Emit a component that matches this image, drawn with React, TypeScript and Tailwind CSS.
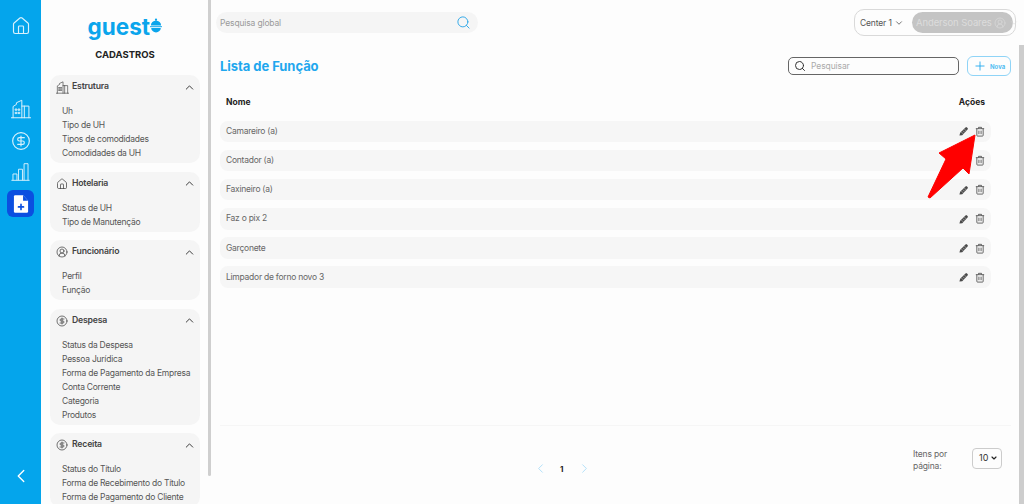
import React from "react";
import { Home, CircleDollarSign, ChevronUp, ChevronDown, ChevronLeft, ChevronRight, Search, Plus, CircleUserRound } from "lucide-react";

const Hotel = ({ className }: { className?: string }) => (
  <svg viewBox="0 0 24 24" fill="none" stroke="currentColor" strokeWidth="1.2" strokeLinejoin="round" strokeLinecap="round" className={className}>
    <path d="M0.5 22.5h23M2.5 22.5V9l4-2.5V4.5L13 1.5v21M13 8.5h8.5v14M16 8.5v14" />
    <path d="M5.5 12h1.5v1.5H5.5zM9 12h1.5v1.5H9zM5.5 16h1.5v1.5H5.5zM9 16h1.5v1.5H9z" />
  </svg>
);

const Bars = ({ className }: { className?: string }) => (
  <svg viewBox="0 0 24 24" fill="none" stroke="currentColor" strokeWidth="1.2" strokeLinejoin="round" className={className}>
    <path d="M0.5 22.5h23M2.5 22.5V14.5h5v8M9.5 22.5V8.5h5v14M16.5 22.5V1.5h5v21" />
  </svg>
);

const FilePlus = () => (
  <svg viewBox="0 0 24 24" className="w-[20px] h-[20px]">
    <path d="M5 1.5h9.5L20.5 8v13a1.5 1.5 0 0 1-1.5 1.5H5A1.5 1.5 0 0 1 3.5 21V3A1.5 1.5 0 0 1 5 1.5z" fill="#fff" />
    <path d="M14.5 1.5V8h6z" fill="#0b4fe0" />
    <path d="M12 12.5v6M9 15.5h6" stroke="#0b4fe0" strokeWidth="2" strokeLinecap="round" />
  </svg>
);

const PencilIcon = () => (
  <svg viewBox="0 0 12 12" className="w-[10px] h-[10px]">
    <path d="M0.5 11.5l0.9-3.4 6.4-6.4a1.2 1.2 0 0 1 1.7 0l0.8 0.8a1.2 1.2 0 0 1 0 1.7L3.9 11z" fill="#4a4a4a" />
    <path d="M3 7.4l2 2M4.8 5.6l2 2M6.6 3.8l2 2" stroke="#f6f6f6" strokeWidth="0.6" />
  </svg>
);

const TrashIcon = () => (
  <svg viewBox="0 0 12 12" fill="none" stroke="#4a4a4a" strokeWidth="1" strokeLinejoin="round" className="w-[10px] h-[11px]">
    <path d="M1 2.6h10M4.2 2.4V1h3.6v1.4M2.2 2.6v8a.9.9 0 0 0 .9.9h5.8a.9.9 0 0 0 .9-.9v-8M4.7 5v4.2M7.3 5v4.2" />
  </svg>
);

const Logo = () => (
  <div className="flex items-start justify-center h-[28px] text-[#0ba5ec] text-[22.5px] leading-[26px] font-bold">
    <span>guest</span>
    <svg viewBox="0 0 20 24" className="w-[12px] h-[15px] mt-[4px] ml-[0.5px]">
      <circle cx="10" cy="2.4" r="1.9" fill="#0ba5ec" />
      <path d="M1.5 12a8.5 8 0 0 1 17 0z" fill="#0ba5ec" />
      <rect x="0" y="13.2" width="20" height="1.6" fill="#0ba5ec" />
      <path d="M2 16h16a8 7.5 0 0 1-16 0z" fill="#0ba5ec" />
    </svg>
  </div>
);

type Section = { title: string; icon: React.ReactNode; items: string[] };

const sections: Section[] = [
  { title: "Estrutura", icon: <Hotel className="w-[13px] h-[13px] shrink-0" />, items: ["Uh", "Tipo de UH", "Tipos de comodidades", "Comodidades da UH"] },
  { title: "Hotelaria", icon: <Home className="w-[12px] h-[12px]" strokeWidth={1.5} />, items: ["Status de UH", "Tipo de Manutenção"] },
  { title: "Funcionário", icon: <CircleUserRound className="w-[12px] h-[12px]" strokeWidth={1.5} />, items: ["Perfil", "Função"] },
  { title: "Despesa", icon: <CircleDollarSign className="w-[12px] h-[12px]" strokeWidth={1.5} />, items: ["Status da Despesa", "Pessoa Jurídica", "Forma de Pagamento da Empresa", "Conta Corrente", "Categoria", "Produtos"] },
  { title: "Receita", icon: <CircleDollarSign className="w-[12px] h-[12px]" strokeWidth={1.5} />, items: ["Status do Título", "Forma de Recebimento do Título", "Forma de Pagamento do Cliente"] },
];

const rows = ["Camareiro (a)", "Contador (a)", "Faxineiro (a)", "Faz o pix 2", "Garçonete", "Limpador de forno novo 3"];

export default function App() {
  return (
    <div className="relative flex w-[1024px] h-[504px] overflow-hidden bg-[#fdfdfd] font-['Inter',sans-serif]">
      {/* rail */}
      <div className="flex flex-col items-center w-[41px] shrink-0 bg-[#04a5ec] text-[#d8f1fc]">
        <div className="mt-[16px] h-[20px]"><Home className="w-[20px] h-[20px]" strokeWidth={1.4} /></div>
        <div className="mt-[63px] h-[20px]"><Hotel className="w-[20px] h-[20px]" /></div>
        <div className="mt-[12px] h-[20px]"><CircleDollarSign className="w-[20px] h-[20px]" strokeWidth={1.4} /></div>
        <div className="mt-[11px] h-[20px]"><Bars className="w-[19px] h-[20px]" /></div>
        <div className="mt-[8px] w-[27px] h-[27px] rounded-[6px] bg-[#0b4fe0] flex items-center justify-center"><FilePlus /></div>
        <div className="mt-auto mb-[17px]"><ChevronLeft className="w-[22px] h-[22px] text-white" strokeWidth={1.5} /></div>
      </div>

      {/* sidebar */}
      <div className="relative w-[171px] shrink-0 h-[504px] overflow-hidden">
        <div className="pl-[9px] pr-[12px] pt-[14px]">
          <Logo />
          <div className="mt-[6px] text-center text-[9.5px] leading-[14px] font-bold text-[#222]">CADASTROS</div>
          <div className="mt-[13px] flex flex-col gap-[8.5px]">
            {sections.map((s) => (
              <div key={s.title} className="rounded-[10px] bg-[#f5f5f5] pt-[5px] pb-[3px]">
                <div className="flex items-center h-[14px] pl-[6px] pr-[4px] text-[#444]">
                  <span className="w-[12px] h-[12px] flex items-center justify-center">{s.icon}</span>
                  <span className="ml-[4px] flex-1 text-[8.7px] tracking-[-0.2px] font-semibold text-[#444]">{s.title}</span>
                  <ChevronUp className="w-[13px] h-[13px] text-[#333]" strokeWidth={1.75} />
                </div>
                <div className="mt-[10px] pl-[12px]">
                  {s.items.map((i) => (
                    <div key={i} className="h-[14px] text-[8.5px] tracking-[-0.25px] leading-[14px] text-[#555] whitespace-nowrap">{i}</div>
                  ))}
                </div>
              </div>
            ))}
          </div>
        </div>
      </div>
      {/* sidebar scrollbar */}
      <div className="absolute left-[208px] top-0 w-[3px] h-[476px] bg-[#cfcfcf] rounded-b-sm" />

      {/* main */}
      <div className="relative flex-1 min-w-0 flex flex-col">
        <div className="flex items-start justify-between h-[45px] pl-[4px] pr-[8px]">
          <div className="mt-[12px] flex items-center w-[262px] h-[21px] rounded-full bg-[#f5f5f5] pl-[4px] pr-[7px]">
            <span className="flex-1 mt-[1px] text-[8.5px] tracking-[-0.15px] text-[#9a9a9a]">Pesquisa global</span>
            <Search className="w-[15px] h-[15px] text-[#2aa5e8]" strokeWidth={1.5} />
          </div>
          <div className="mt-[9px] flex items-center w-[162px] h-[27px] rounded-[10px] border border-[#d9d9d9] bg-[#fdfdfd] pl-[5px] pr-[2px]">
            <span className="mt-[1px] text-[8.5px] tracking-[-0.15px] text-[#555]">Center 1</span>
            <ChevronDown className="w-[10px] h-[10px] ml-[2px] text-[#444]" strokeWidth={1.75} />
            <div className="ml-auto flex items-center w-[101px] h-[21px] rounded-full bg-[#c4c4c4] pl-[4px] text-[#dcdcdc]">
              <span className="mt-[1px] text-[9.5px] tracking-[-0.1px] whitespace-nowrap">Anderson Soares</span>
              <CircleUserRound className="w-[12px] h-[12px] ml-[2px] shrink-0" strokeWidth={1.25} />
              <ChevronDown className="w-[10px] h-[10px] ml-[3px] shrink-0" strokeWidth={1.5} />
            </div>
          </div>
        </div>

        <div className="flex-1 flex min-h-0">
          <div className="flex-1 min-w-0 flex flex-col pl-[8px] pr-[8px]">
            <div className="flex items-center h-[20px] mt-[11px]">
              <span className="mt-[1px] text-[13px] font-bold text-[#1fa7ee] tracking-[-0.05px]">Lista de Função</span>
              <div className="ml-auto flex items-center w-[171px] h-[18px] rounded-[5px] border border-[#666] pl-[5px]">
                <Search className="w-[12px] h-[12px] text-[#333]" strokeWidth={2} />
                <span className="ml-[5px] text-[8.5px] tracking-[-0.1px] text-[#aaa]">Pesquisar</span>
              </div>
              <div className="ml-[8px] flex items-center w-[44px] h-[20px] rounded-[6px] border border-[#8fd4f7] pl-[5px]">
                <Plus className="w-[14px] h-[14px] text-[#1fa7ee]" strokeWidth={1.5} />
                <span className="ml-[3px] text-[6px] font-bold text-[#55bdf2]">Nova</span>
              </div>
            </div>

            <div className="mt-[19px] mr-[20px] flex items-center justify-between h-[14px] pl-[6px] pr-[6px] text-[8.5px] font-bold text-[#222]">
              <span>Nome</span>
              <span>Ações</span>
            </div>

            <div className="mt-[11.5px] mr-[20px] flex flex-col gap-[7.7px]">
              {rows.map((r) => (
                <div key={r} className="flex items-center h-[21.5px] rounded-[8px] bg-[#f6f6f6] pl-[6px] pr-[6px]">
                  <span className="flex-1 text-[8.5px] tracking-[-0.25px] text-[#666]">{r}</span>
                  <PencilIcon />
                  <span className="ml-[6px]"><TrashIcon /></span>
                </div>
              ))}
            </div>

            <div className="mt-auto border-t border-[#f6f6f6] h-[79px] flex items-start">
              <div className="flex items-center ml-[313px] mt-[35px]">
                <ChevronLeft className="w-[15px] h-[15px] text-[#9fd9f7]" strokeWidth={1.25} />
                <span className="ml-[12px] w-[6px] text-[8px] font-bold text-[#222]">1</span>
                <ChevronRight className="ml-[11px] w-[15px] h-[15px] text-[#9fd9f7]" strokeWidth={1.25} />
              </div>
              <div className="ml-auto mr-[9px] mt-[22px] flex items-center">
                <span className="w-[38px] text-[8.5px] tracking-[-0.15px] leading-[12px] text-[#666]">Itens por página:</span>
                <div className="ml-[21px] flex items-center justify-between w-[30px] h-[21px] rounded-[4px] border border-[#ccc] pl-[6px] pr-[3px] mt-[-4px]">
                  <span className="text-[9px] text-[#333]">10</span>
                  <ChevronDown className="w-[8px] h-[8px] text-[#222]" strokeWidth={3.5} />
                </div>
              </div>
            </div>
          </div>
          {/* main scrollbar */}
          <div className="w-[5px] shrink-0 bg-[#cdcdcd]" />
        </div>
      </div>

      {/* annotation arrow */}
      <svg className="absolute left-[920px] top-[125px] w-[70px] h-[80px]" viewBox="920 125 70 80">
        <path d="M975 135 L939 153 L946 159 L928 197 L930 198 L963 168 L969 174 Z" fill="#ff0000" stroke="#ff0000" strokeWidth="1" strokeLinejoin="round" />
      </svg>
    </div>
  );
}
